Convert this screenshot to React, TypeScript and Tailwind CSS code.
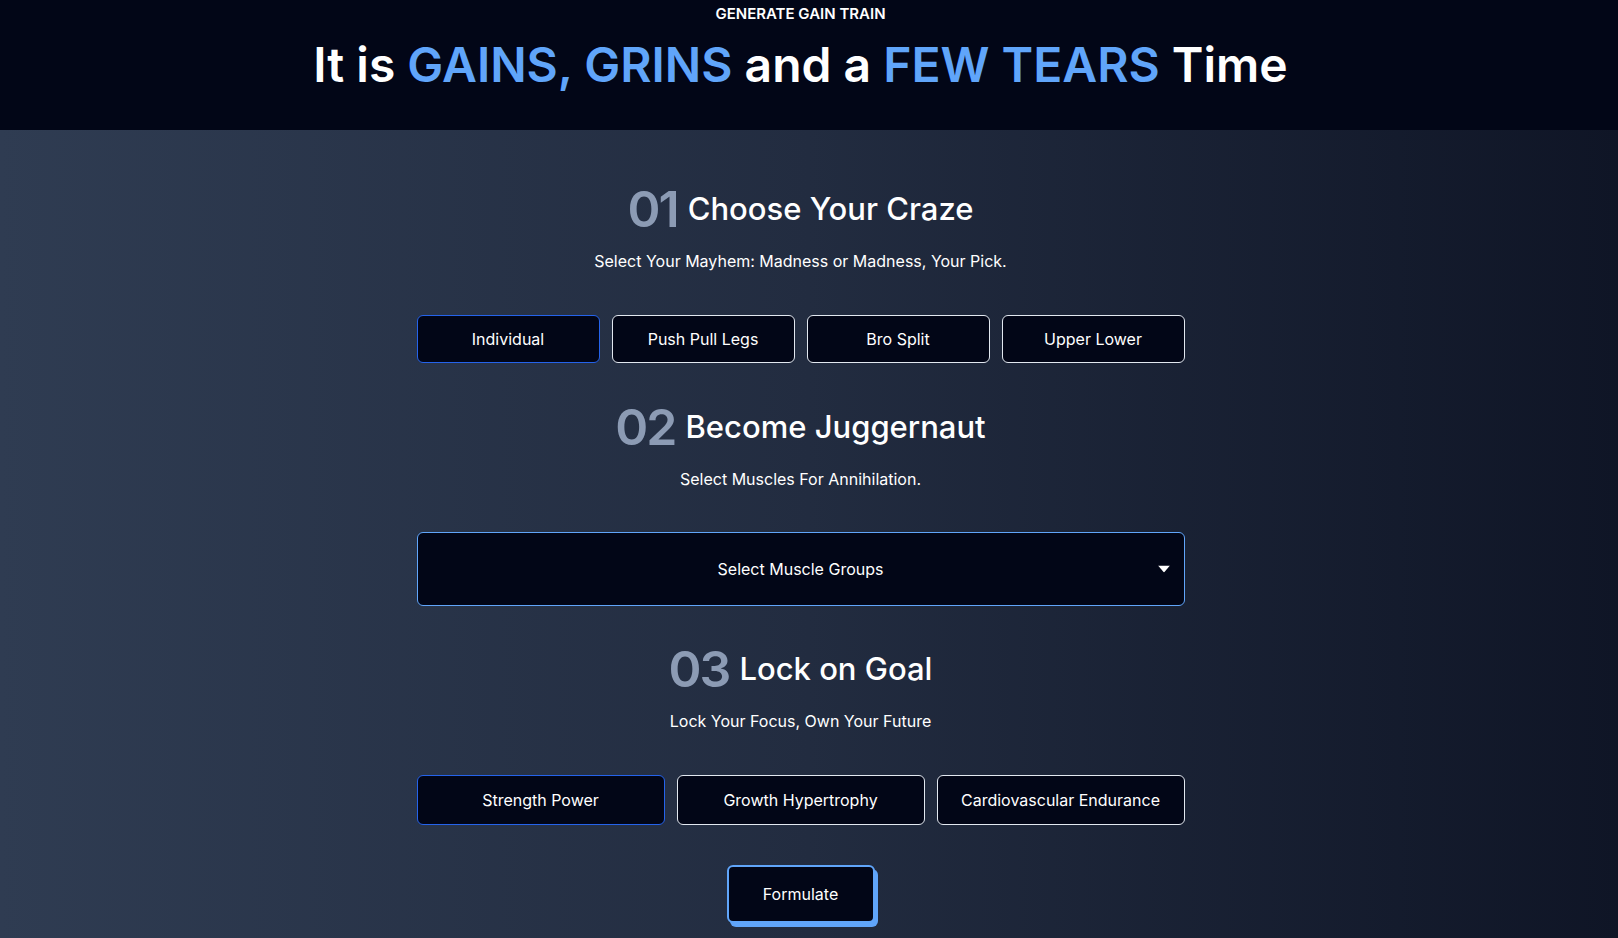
import { useState } from "react";

const splits = ["Individual", "Push Pull Legs", "Bro Split", "Upper Lower"];
const goals = ["Strength Power", "Growth Hypertrophy", "Cardiovascular Endurance"];

const SectionHeader = ({ num, title, sub }: { num: string; title: string; sub: string }) => {
  return (
    <div className="flex flex-col items-center">
      <div className="flex items-center justify-center gap-2.5 h-[60px]">
        <span className="text-[50px] leading-[60px] font-semibold text-[#8c9bb4] tracking-[-0.04em]">{num}</span>
        <span className="text-[31px] leading-[60px] font-medium text-white">{title}</span>
      </div>
      <p className="mt-[10px] text-base leading-6 text-white">{sub}</p>
    </div>
  );
};

export default function App() {
  const [split, setSplit] = useState("Individual");
  const [goal, setGoal] = useState("Strength Power");

  return (
    <div className="min-h-screen pr-[17px] font-['Inter',sans-serif] bg-gradient-to-r from-[#2f3c52] via-[#222c40] to-[#0f1526]">
      {/* Header */}
      <header className="bg-[#020617] h-[130px] -mr-[17px] pr-[17px] flex flex-col items-center pt-[5px]">
        <p className="text-[15px] font-semibold text-white leading-[18px]">GENERATE GAIN TRAIN</p>
        <h1 className="mt-[12px] text-5xl leading-[60px] font-semibold text-white">
          It is <span className="text-[#60a5fa]">GAINS, GRINS</span> and a{" "}
          <span className="text-[#60a5fa]">FEW TEARS</span> Time
        </h1>
      </header>

      <main className="w-[768px] mx-auto pt-[49px] pb-10 flex flex-col">
        <SectionHeader num="01" title="Choose Your Craze" sub="Select Your Mayhem: Madness or Madness, Your Pick." />
        <div className="mt-[42px] grid grid-cols-4 gap-3">
          {splits.map((s) => (
            <button
              key={s}
              onClick={() => setSplit(s)}
              className={`h-12 rounded-md bg-[#020617] text-white text-base border ${
                split === s ? "border-[#2563eb]" : "border-[#e2e8f0]"
              }`}
            >
              {s}
            </button>
          ))}
        </div>

        <div className="mt-[34px]">
          <SectionHeader num="02" title="Become Juggernaut" sub="Select Muscles For Annihilation." />
        </div>
        <button className="mt-[41px] relative h-[74px] w-full rounded-md border border-[#60a5fa] bg-[#020617] text-white text-base flex items-center justify-center">
          Select Muscle Groups
          <svg className="absolute right-[14px] top-1/2 -translate-y-1/2" width="12" height="7" viewBox="0 0 12 7">
            <path d="M0 0h12L6 7z" fill="white" />
          </svg>
        </button>

        <div className="mt-[33px]">
          <SectionHeader num="03" title="Lock on Goal" sub="Lock Your Focus, Own Your Future" />
        </div>
        <div className="mt-[42px] grid grid-cols-3 gap-3">
          {goals.map((g) => (
            <button
              key={g}
              onClick={() => setGoal(g)}
              className={`h-[50px] rounded-md bg-[#020617] text-white text-base border ${
                goal === g ? "border-[#2563eb]" : "border-[#e2e8f0]"
              }`}
            >
              {g}
            </button>
          ))}
        </div>

        <div className="mt-[40px] flex justify-center">
          <button className="w-[148px] h-[58px] rounded-md border-2 border-[#60a5fa] bg-[#020617] text-white text-base shadow-[3px_4px_0_0_#60a5fa]">
            Formulate
          </button>
        </div>
      </main>
    </div>
  );
}
